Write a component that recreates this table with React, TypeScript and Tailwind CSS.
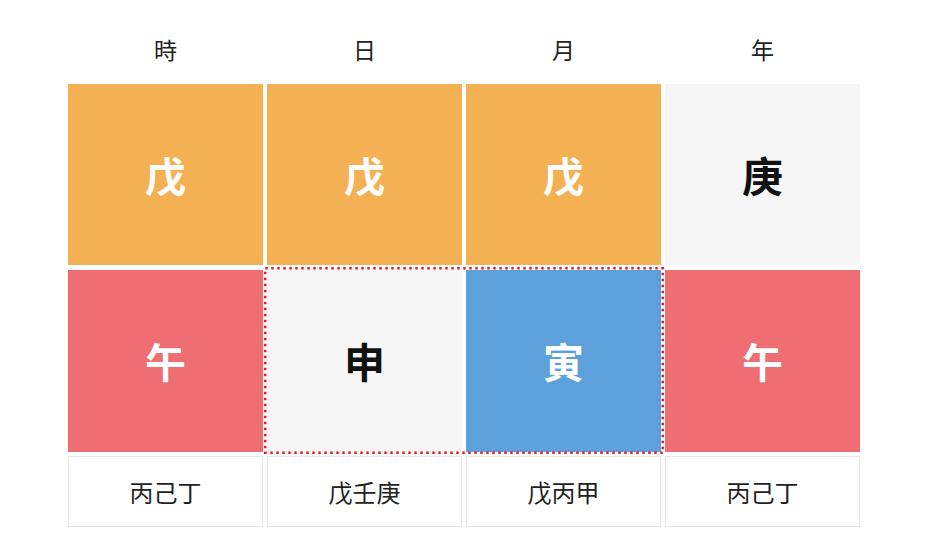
import React from "react";

const font = { fontFamily: '"Noto Sans CJK SC", "Noto Sans CJK JP", sans-serif' };

export default function App() {
  const heads = ["時", "日", "月", "年"];
  const tops = [
    { t: "戊", bg: "bg-[#f4b154]", c: "text-white" },
    { t: "戊", bg: "bg-[#f4b154]", c: "text-white" },
    { t: "戊", bg: "bg-[#f4b154]", c: "text-white" },
    { t: "庚", bg: "bg-[#f6f6f6]", c: "text-[#111]" },
  ];
  const hidden = ["丙己丁", "戊壬庚", "戊丙甲", "丙己丁"];
  return (
    <div className="w-[932px] h-[545px] bg-white" style={font}>
      <div className="ml-[68px] w-[792px] flex flex-col">
        <div className="grid grid-cols-4 gap-x-1 h-[84px] pt-[14px]">
          {heads.map((h, i) => (
            <div key={i} className="flex items-center justify-center text-[23px] text-[#222]">
              {h}
            </div>
          ))}
        </div>
        <div className="grid grid-cols-4 gap-x-1 h-[181px]">
          {tops.map((c, i) => (
            <div key={i} className={`${c.bg} ${c.c} flex items-center justify-center text-[41px] font-bold`}>
              {c.t}
            </div>
          ))}
        </div>
        <div className="grid grid-cols-4 gap-x-1 h-[182px] mt-[5px]">
          <div className="bg-[#ee6e73] text-white flex items-center justify-center text-[41px] font-bold">午</div>
          <div className="relative col-span-2 grid grid-cols-2 gap-x-1">
            <div className="bg-[#f6f6f6] text-[#111] flex items-center justify-center text-[41px] font-bold">申</div>
            <div className="bg-[#5ca1dc] text-white flex items-center justify-center text-[41px] font-bold">寅</div>
            <svg
              className="absolute left-[-3px] top-[-3px] pointer-events-none"
              width="400"
              height="187"
              viewBox="0 0 400 187"
            >
              <rect
                x="1.25"
                y="1.25"
                width="397.5"
                height="184.5"
                fill="none"
                stroke="#ec1c24"
                strokeWidth="2.5"
                strokeDasharray="2.5 3.5"
              />
            </svg>
          </div>
          <div className="bg-[#ee6e73] text-white flex items-center justify-center text-[41px] font-bold">午</div>
        </div>
        <div className="grid grid-cols-4 gap-x-1 h-[71px] mt-[4px]">
          {hidden.map((h, i) => (
            <div key={i} className="border border-[#e8e8e8] flex items-center justify-center text-[24px] text-[#222]">
              {h}
            </div>
          ))}
        </div>
      </div>
    </div>
  );
}
